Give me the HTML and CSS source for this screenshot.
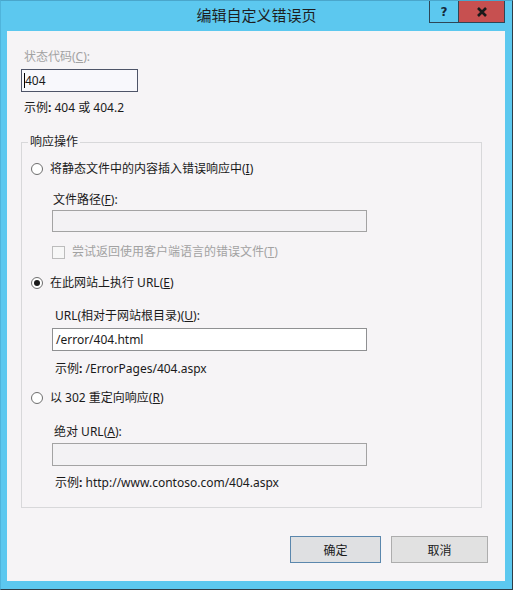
FILE: index.html
```html
<!DOCTYPE html>
<html lang="zh-CN">
<head>
<meta charset="utf-8">
<title>编辑自定义错误页</title>
<link rel="stylesheet" href="styles.css">
</head>
<body>
<div class="window">
  <div class="titlebar">
    <div class="title">编辑自定义错误页</div>
    <div class="caption-buttons">
      <span class="cap-btn help">?</span>
      <span class="cap-btn close">
        <svg width="12" height="10" viewBox="0 0 12 10"><path d="M2 1 L10 9 M10 1 L2 9" stroke="#1a1a1a" stroke-width="2.6" fill="none"/></svg>
      </span>
    </div>
  </div>
  <div class="client">
    <div class="label disabled indent3">状态代码(<u>C</u>):</div>
    <div class="textbox code-box"><span class="caret"></span>404</div>
    <div class="label indent3 hint-top">示例<b>:</b> 404 或 404.2</div>

    <fieldset class="group">
      <legend>响应操作</legend>

      <div class="option first">
        <span class="radio"></span>
        <span>将静态文件中的内容插入错误响应中(<u>I</u>)</span>
      </div>
      <div class="sub">
        <div class="label sub-label ml1 mt15">文件路径(<u>F</u>):</div>
        <div class="textbox wide off mt2 h22"></div>
        <div class="check-row">
          <span class="checkbox"></span>
          <span class="disabled">尝试返回使用客户端语言的错误文件(<u>T</u>)</span>
        </div>
      </div>

      <div class="option mt15">
        <span class="radio checked"></span>
        <span>在此网站上执行 URL(<u>E</u>)</span>
      </div>
      <div class="sub">
        <div class="label sub-label ml3 mt17">URL(相对于网站根目录)(<u>U</u>):</div>
        <div class="textbox wide mt4">/error/404.html</div>
        <div class="label ml3 mt10">示例<b>:</b> /ErrorPages/404.aspx</div>
      </div>

      <div class="option mt13">
        <span class="radio"></span>
        <span>以 302 重定向响应(<u>R</u>)</span>
      </div>
      <div class="sub">
        <div class="label sub-label ml2 mt18">绝对 URL(<u>A</u>):</div>
        <div class="textbox wide off mt3"></div>
        <div class="label ml3 mt9">示例<b>:</b> http://www.contoso.com/404.aspx</div>
      </div>
    </fieldset>

    <div class="buttons">
      <button class="btn default">确定</button>
      <button class="btn cancel">取消</button>
    </div>
  </div>
</div>
</body>
</html>
```

FILE: styles.css
```css
html, body {
  margin: 0;
  padding: 0;
  background: #ffffff;
}

body {
  font-family: "Noto Sans", "Noto Sans CJK SC", sans-serif;
  font-size: 12px;
  color: #1a1a1a;
}

.window {
  box-sizing: border-box;
  width: 513px;
  height: 590px;
  background: #5cc8ef;
  border-top: 1px solid #4aa6cb;
  border-left: 1px solid #4fb4db;
  border-right: 1px solid #2f3d47;
  border-bottom: 1px solid #2f3d47;
}

.titlebar {
  height: 30px;
  display: grid;
  grid-template-columns: 1fr auto 1fr;
  align-items: start;
}

.title {
  grid-column: 2;
  font-family: "Noto Sans CJK SC", sans-serif;
  font-size: 15px;
  line-height: 28px;
  color: #1e1e1e;
}

.caption-buttons {
  grid-column: 3;
  justify-self: end;
  margin-right: 7px;
  display: flex;
  height: 21px;
  border: 1px solid #2d4656;
  border-top: none;
}

.cap-btn {
  display: flex;
  align-items: center;
  justify-content: center;
  height: 21px;
}

.help {
  width: 28px;
  border-right: 1px solid #2d4656;
  font-family: "DejaVu Sans", sans-serif;
  font-weight: bold;
  font-size: 12px;
  color: #15283a;
}

.close {
  width: 45px;
  background: #c75050;
}

.client {
  margin-left: 6px;
  width: 498px;
  height: 550px;
  box-sizing: border-box;
  background: #f6f4f6;
  padding: 18px 0 0 14px;
}

.label {
  line-height: 16px;
  height: 16px;
  white-space: nowrap;
}

.label b {
  font-weight: bold;
}

.disabled {
  color: #a2a2a2;
}

.indent3 { margin-left: 3px; }
.ml1 { margin-left: 1px; }
.ml2 { margin-left: 2px; }
.ml3 { margin-left: 3px; }
.mt2 { margin-top: 2px; }
.mt3 { margin-top: 3px; }
.mt4 { margin-top: 4px; }
.mt9 { margin-top: 9px; }
.mt10 { margin-top: 10px; }
.mt13 { margin-top: 13px; }
.mt15 { margin-top: 15px; }
.mt17 { margin-top: 17px; }
.mt18 { margin-top: 18px; }

.hint-top { margin-top: 8px; }

u {
  text-decoration: underline;
  text-underline-offset: 1px;
}

.textbox {
  box-sizing: border-box;
  height: 23px;
  border: 1px solid #8f9092;
  background: #ffffff;
  padding-left: 3px;
  line-height: 21px;
  display: flex;
  align-items: center;
  white-space: nowrap;
}

.code-box {
  margin-top: 4px;
  width: 117px;
  border-color: #4e5468;
  background: #f8f8fc;
  padding-left: 2px;
}

.caret {
  display: inline-block;
  width: 1px;
  height: 15px;
  background: #000;
  margin-right: 0;
}

.wide {
  width: 315px;
}

.off {
  background: #f3f2f4;
  border-color: #a3a3a3;
}

.h22 { height: 22px; }

.group {
  box-sizing: border-box;
  width: 461px;
  margin: 18px 0 0 0;
  padding: 0 0 16px 0;
  border: 1px solid #d8d8da;
  min-width: 0;
}

.group legend {
  margin-left: 6px;
  padding: 0 2px;
  line-height: 16px;
}

.option {
  display: flex;
  align-items: center;
  gap: 7px;
  padding-left: 9px;
  height: 16px;
  line-height: 16px;
  white-space: nowrap;
}

.option.first {
  margin-top: 11px;
}

.radio {
  box-sizing: border-box;
  width: 12px;
  height: 12px;
  border: 1px solid #6e6e6e;
  border-radius: 50%;
  background: #ffffff;
  display: flex;
  align-items: center;
  justify-content: center;
  flex: none;
}

.radio.checked::after {
  content: "";
  width: 6px;
  height: 6px;
  border-radius: 50%;
  background: #1a1a1a;
}

.sub {
  padding-left: 30px;
}

.check-row {
  margin-top: 12px;
  display: flex;
  align-items: center;
  gap: 7px;
  height: 16px;
  line-height: 16px;
  white-space: nowrap;
}

.checkbox {
  box-sizing: border-box;
  width: 13px;
  height: 13px;
  border: 1px solid #bcbcbc;
  background: #f7f7f7;
  flex: none;
}

.buttons {
  margin-top: 28px;
  padding-right: 17px;
  display: flex;
  justify-content: flex-end;
  gap: 10px;
}

.btn {
  box-sizing: border-box;
  height: 27px;
  font-family: "Noto Sans CJK SC", sans-serif;
  font-size: 12px;
  color: #1a1a1a;
  background: #e1e1e1;
  border: 1px solid #adadad;
  padding: 0;
  margin: 0;
}

.btn.default {
  width: 91px;
  border-color: #5b87ad;
  background: #dfe0e2;
}

.btn.cancel {
  width: 97px;
}
```
